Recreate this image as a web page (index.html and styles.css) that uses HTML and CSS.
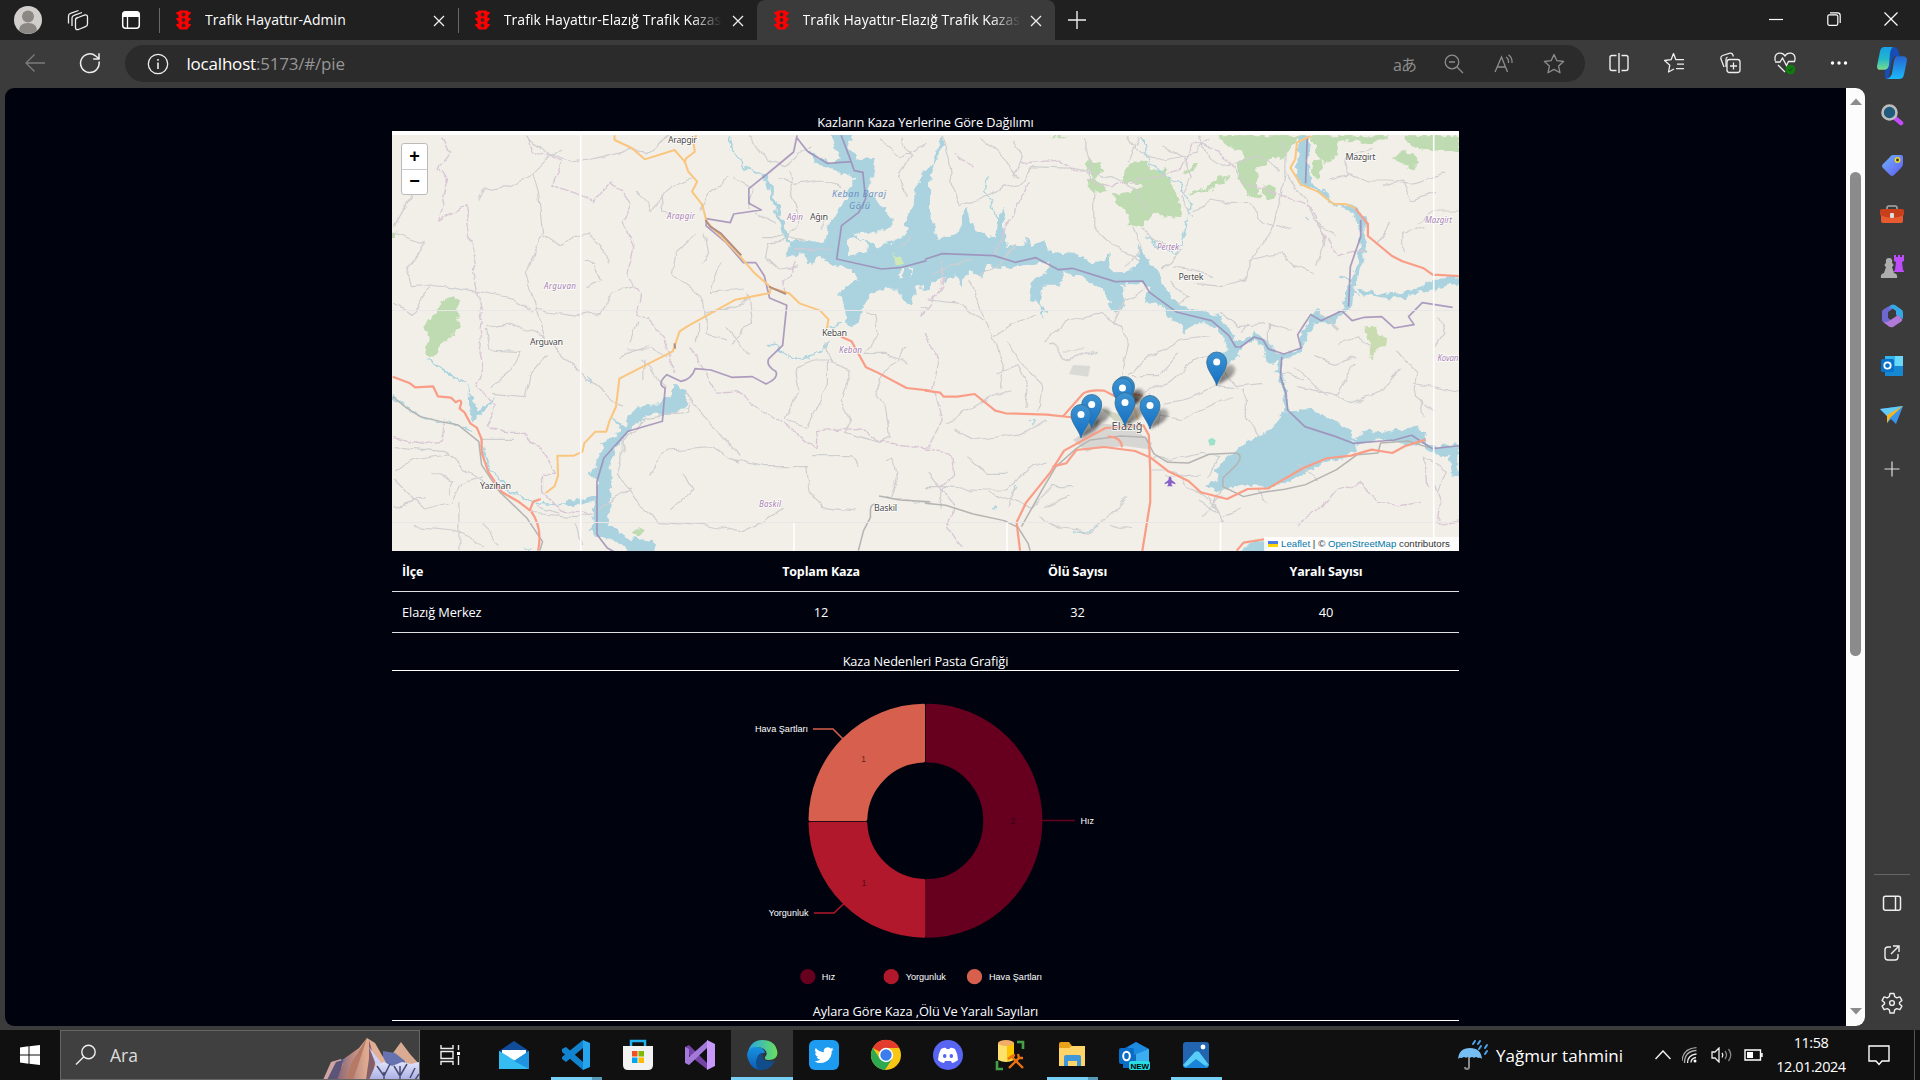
FILE: index.html
```html
<!DOCTYPE html>
<html lang="tr">
<head>
<meta charset="utf-8">
<title>Trafik Hayattır-Elazığ Trafik Kazası</title>
<link rel="stylesheet" href="styles.css">
</head>
<body>
<svg class="defs" width="0" height="0">
  <defs>
    <symbol id="light" viewBox="0 0 15 20"><path d="M4 .5h7q1.500 0 1.500 1.500H15q-.3 2.800-2.500 3.400V8H15q-.3 2.800-2.500 3.400V14H15q-.3 2.800-2.500 3.400 0 2.100-2.500 2.100H5q-2.500 0-2.500-2.100Q.3 16.800 0 14h2.500v-2.600Q.3 10.800 0 8h2.500V5.400Q.3 4.800 0 2h2.500Q2.500.5 4 .5Z" fill="#f00"/><g fill="#4a2222"><circle cx="7.500" cy="4.500" r="1.900"/><circle cx="7.500" cy="10" r="1.900"/><circle cx="7.500" cy="15.500" r="1.900"/></g></symbol>
    <symbol id="x" viewBox="0 0 12 12"><path d="M1 1l10 10M11 1L1 11" stroke="#eee" stroke-width="1.300"/></symbol>
    <linearGradient id="pinfill" x2="0" y2="1"><stop offset="0" stop-color="#3e93cf"/><stop offset="1" stop-color="#126fc6"/></linearGradient>
    <linearGradient id="shadefill" x1="0" y1="1" x2="1" y2="0"><stop offset="0" stop-color="#000" stop-opacity=".8"/><stop offset="1" stop-color="#000" stop-opacity=".3"/></linearGradient>
    <filter id="soft" x="-50%" y="-50%" width="200%" height="200%"><feGaussianBlur stdDeviation="1.800"/></filter>
    <filter id="coast" x="0" y="0" width="1067" height="416" filterUnits="userSpaceOnUse" color-interpolation-filters="sRGB"><feTurbulence type="fractalNoise" baseFrequency=".13" numOctaves="2" seed="4"/><feDisplacementMap in="SourceGraphic" scale="9" xChannelSelector="R" yChannelSelector="G"/></filter>
    <filter id="winding" x="0" y="0" width="1067" height="416" filterUnits="userSpaceOnUse" color-interpolation-filters="sRGB"><feTurbulence type="fractalNoise" baseFrequency=".06" numOctaves="2" seed="9"/><feDisplacementMap in="SourceGraphic" scale="9" xChannelSelector="R" yChannelSelector="G"/></filter>
    <g id="shade"><path d="M0 0L5-12Q10-24 17-19Q21-14 13-7Z" fill="url(#shadefill)" opacity=".75" filter="url(#soft)"/></g>
    <g id="pin"><path d="M0 0C-2-8-10-15-10-23.500A10 10 0 0 1 10-23.500C10-15 2-8 0 0Z" fill="url(#pinfill)" stroke="#2e6c97" stroke-width=".8"/><circle cy="-23.500" r="3.500" fill="#fff"/></g>
  </defs>
</svg>

<header class="tabs">
  <div class="tools">
    <svg width="28" height="28" viewBox="0 0 28 28"><circle cx="14" cy="14" r="14" fill="#d0cfcc"/><circle cx="14" cy="10.500" r="6" fill="#8b8884"/><path d="M5 24.500q0-7.500 9-7.500t9 7.500a14 14 0 0 1-18 0Z" fill="#8b8884"/></svg>
    <svg width="22" height="22" viewBox="0 0 22 22" fill="none" stroke="#eee" stroke-width="1.300"><path d="M1.500 14.500V7q0-2 2-2.600l8-2.900M5 17V9q0-2 2-2.600l8-2.900"/><path d="M11 8.500l7-2.500q2.500-.5 2.500 2v7q0 2-2 2.700l-7 2.800q-3 .8-3-2v-7.500q0-2 2.500-2.500Z"/></svg>
    <svg width="20" height="20" viewBox="0 0 20 20"><rect x="1.700" y="1.700" width="16.600" height="16.600" rx="3" fill="none" stroke="#fff" stroke-width="1.500"/><path d="M1.500 7V4q0-2.500 2.500-2.500h12q2.500 0 2.500 2.500v3Z" fill="#fff"/><path d="M6.500 7v11" stroke="#fff" stroke-width="1.300"/></svg>
  </div>
  <div class="tab bar"><svg class="lamp"><use href="#light"/></svg><span class="name">Trafik Hayattır-Admin</span><svg class="shut"><use href="#x"/></svg></div>
  <div class="tab bar"><svg class="lamp"><use href="#light"/></svg><span class="name fade">Trafik Hayattır-Elazığ Trafik Kazası</span><svg class="shut"><use href="#x"/></svg></div>
  <div class="tab active"><svg class="lamp"><use href="#light"/></svg><span class="name fade">Trafik Hayattır-Elazığ Trafik Kazası</span><svg class="shut"><use href="#x"/></svg></div>
  <svg class="add" width="18" height="18" viewBox="0 0 18 18"><path d="M9 0v18M0 9h18" stroke="#eee" stroke-width="1.400"/></svg>
  <div class="window">
    <svg width="14" height="14" viewBox="0 0 14 14"><path d="M0 7.500h14" stroke="#fff" stroke-width="1.200"/></svg>
    <svg width="14" height="14" viewBox="0 0 14 14" fill="none" stroke="#fff" stroke-width="1.200"><rect x=".8" y="2.800" width="10" height="10.500" rx="1.500"/><path d="M3 .8h7.500q2.700 0 2.700 2.700V11"/></svg>
    <svg width="14" height="14" viewBox="0 0 14 14"><path d="M.5.500l13 13M13.500.500l-13 13" stroke="#fff" stroke-width="1.200"/></svg>
  </div>
</header>

<div class="toolbar">
  <div class="nav">
    <svg width="20" height="18" viewBox="0 0 20 18" fill="none" stroke="#7c7c7c" stroke-width="1.300"><path d="M20 9H1M9.500.5L1 9l8.500 8.500"/></svg>
    <svg width="22" height="22" viewBox="0 0 22 22" fill="none" stroke="#eee" stroke-width="1.500"><path d="M20 9.500A9.300 9.300 0 1 1 16.500 3.800L20 6.800M20 1.200v5.700h-5.800"/></svg>
  </div>
  <div class="address">
    <svg width="22" height="22" viewBox="0 0 22 22" fill="none" stroke="#eee" stroke-width="1.300"><circle cx="11" cy="11" r="9.700"/><path d="M11 9.500v6.500M11 6v1.700" stroke-width="1.600"/></svg>
    <span class="url">localhost<i>:5173/#/pie</i></span>
    <span class="lang">aあ</span>
    <svg width="20" height="20" viewBox="0 0 20 20" fill="none" stroke="#8d8d8d" stroke-width="1.300"><circle cx="8" cy="8" r="6.800"/><path d="M13 13l6 6M5 8h6"/></svg>
    <svg width="20" height="20" viewBox="0 0 20 20" fill="none" stroke="#8d8d8d" stroke-width="1.300"><path d="M1 18L7.500 3 13.500 18M3.300 13h8.200M12 3q3 2 2.500 6M14.500.8q4 3 3.500 8.200"/></svg>
    <svg width="22" height="22" viewBox="0 0 22 22" fill="none" stroke="#8d8d8d" stroke-width="1.300" stroke-linejoin="round"><path d="M11 1.500l2.900 6.200 6.700.8-5 4.600 1.400 6.700-6-3.400-6 3.400 1.400-6.700-5-4.600 6.700-.8Z"/></svg>
  </div>
  <div class="extras">
    <svg width="22" height="22" viewBox="0 0 22 22" fill="none" stroke="#eee" stroke-width="1.400"><path d="M8.500 3.500H4Q2 3.500 2 5.500v11q0 2 2 2h4.500M13.500 3.500H18q2 0 2 2v11q0 2-2 2h-4.500M11 1v20"/></svg>
    <svg width="22" height="22" viewBox="0 0 22 22" fill="none" stroke="#eee" stroke-width="1.300" stroke-linejoin="round"><path d="M11 17l-5.500 3 1.300-6.800-5.200-4.700 6.500-.8L10.500 1.500l2.400 6.200h8.100M14 12.200h7M13 16.700h8"/></svg>
    <svg width="22" height="22" viewBox="0 0 22 22" fill="none" stroke="#eee" stroke-width="1.300"><path d="M5 15L1.800 6.500Q1.500 4.300 3.500 3.500L11 1.200q2.300-.3 3 2l.4 1.300"/><path d="M7 15V7.500q0-1.800 1.500-2.500"/><rect x="8" y="7.500" width="13" height="13" rx="2.500"/><path d="M14.500 10.500v7M11 14h7"/></svg>
    <svg width="22" height="24" viewBox="0 0 22 24"><path d="M1.300 10Q-.2 3.500 5 2.200q4-.7 6 2.800 2-3.500 6-2.800 5.200 1.300 3.700 7.800M1 11h5l2.500-4 4 7.500 2-4H21M4 14l7 7" fill="none" stroke="#eee" stroke-width="1.300"/><circle cx="16.500" cy="18.500" r="4.800" fill="#107c10"/><path d="M14.500 18.500l1.500 1.500 2.700-3" fill="none" stroke="#163f16"/></svg>
    <svg width="18" height="6" viewBox="0 0 18 6" fill="#fff"><circle cx="2.500" cy="3" r="1.700"/><circle cx="9" cy="3" r="1.700"/><circle cx="15.500" cy="3" r="1.700"/></svg>
    <svg width="30" height="32" viewBox="0 0 30 28" preserveAspectRatio="none"><defs><linearGradient id="c1" x2="0" y2="1"><stop stop-color="#18a0e8"/><stop offset=".5" stop-color="#20b7ca"/><stop offset="1" stop-color="#7bdc8d"/></linearGradient><linearGradient id="c2" x2="0" y2="1"><stop stop-color="#2765d2"/><stop offset="1" stop-color="#1cb8fa"/></linearGradient></defs><path d="M7 0h9q5 0 6 5l1 3h-4q-3 0-4 4L12 26q-1 2-3 2-1 0-1-3Z" fill="#174db4"/><path d="M7 0h9q-2 1-3 5l-1 11q-1 4-5 4H3q-4 0-2.600-5L3 4Q4 0 7 0Z" fill="url(#c1)"/><path d="M20 8h6q5 0 3.700 5L27 24q-1 4-5 4H9q5-1 6-5l2-11q1-4 3-4Z" fill="url(#c2)"/></svg>
  </div>
</div>

<div class="workspace">
<main class="page">
  <div class="content">
    <h2 class="title">Kazların Kaza Yerlerine Göre Dağılımı</h2>
    <div class="map">
      <svg class="tiles" width="1067" height="416" viewBox="0 4 1067 416">
        <g transform="translate(0 4)">
        <g filter="url(#coast)"><g transform="translate(0 -4)">
          <g transform="translate(-2 -21) scale(.3444 .3333)">
            <path class="wood" d="M125 620L150 580 185 558 202 570 195 620 206 650 175 685 150 700 130 740 105 735 112 690 100 650Z"/>
            <path class="wood" d="M6 368h14v16H6ZM705 1268l15-12 14 8-12 14h-14Z"/>
            <path class="water" d="M1275 66L1343 66 1330 120 1370 150 1408 140 1400 200 1385 240 1430 285 1460 330 1455 350 1420 370 1365 372 1345 365 1350 380 1400 395 1415 410 1445 400 1485 380 1505 365 1495 340 1520 290 1525 225 1568 180 1568 540 1530 530 1512 590 1490 570 1470 535 1420 540 1392 560 1370 590 1368 620 1350 650 1325 640 1322 600 1300 555 1330 525 1355 510 1340 480 1290 465 1250 440 1220 470 1200 430 1150 445 1160 395 1210 390 1260 400 1270 350 1310 290 1330 240 1350 200 1290 180 1240 165 1205 120 1280 155 1310 145 1285 110Z"/>
            <path class="land" d="M1330 392l25-6 28 8 6 26-24 12-35 4ZM1480 480l12 0-4 24-8 0ZM1508 478l8 0-4 20Z"/>
            <path d="M1465 432l16 8 6 22-16 0Z" fill="#cfe8b4"/>
            <path class="water" d="M823 824L850 835 862 860 860 885 830 910 760 915 715 935 695 970 655 1010 640 1060 640 1100 645 1140 635 1240 660 1260 700 1290 740 1285 775 1300 770 1326 700 1326 650 1290 600 1278 585 1260 590 1200 605 1150 600 1110 580 1090 600 1060 615 1020 610 1000 640 985 680 955 690 920 720 890 790 878 810 860Z"/>
            <path class="water" d="M228 825l15 50 10 30 60-45-50 55-17 16-16-30ZM510 1172l45-6 58-15 5 18-60 14-48 4ZM640 920l44 30-8 14Z"/>
            <path class="thinwater" d="M1080 195l20 30 20 60 20 70 20 40" stroke-width="11"/>
            <path class="thinwater" d="M985 76l5 40 45 60 48 20M105 745l50 35 70 45M1100 710q22-24 28 10 50 50 125 5l20-30M1265 655l50-15M265 1000l20 70 60 70 70 40 100 5M600 1100l-30-10M390 1318h20" stroke-width="5"/>
            <path class="thinwater" d="M8 860l80 60 110 25 40 20M573 805l12 8" stroke-width="4"/>
          </g>
          <g transform="translate(533 -21) scale(.3444 .3333)">
            <g class="wood">
              <path d="M545 250L600 245 640 225 575 215 580 180 600 155 645 152 655 180 690 175 715 215 735 260 742 325 700 320 660 310 625 350 595 340 585 310 560 280ZM470 155L505 150 515 185 495 205 525 240 480 245 475 210 490 195 470 180ZM858 76L1110 76 1060 105 1040 150 1010 140 990 165 965 175 960 220 980 260 945 265 910 210 905 160 935 130 870 105Z"/>
              <path d="M1120 76L1345 76 1290 106 1250 92 1200 95 1195 140 1160 160 1135 120ZM1125 150L1150 145 1155 170 1140 210 1120 195ZM1395 76L1551 76 1551 130 1500 122 1450 120 1405 108ZM1355 145L1390 118 1425 135 1428 160 1410 180 1390 155ZM770 245L830 230 850 200 880 195 870 225 820 240 775 256ZM750 180l40-18-6 16-34 14ZM980 235L1020 225 1015 265 990 272ZM370 76h40v6h-40Z"/>
              <path fill="#c8dcb0" d="M1272 652L1310 650 1318 680 1342 684 1338 708 1312 712 1300 748 1288 740 1295 700Z"/>
            </g>
            <path class="water" d="M-8 180L20 170 42 100 46 76 54 100 20 180 8 260 20 330 40 390 100 370 115 292 140 350 180 375 205 380 208 330 200 300 215 320 235 290 228 340 238 410 285 410 295 378 312 408 345 388 360 425 410 430 460 440 490 465 520 450 535 425 540 480 565 490 605 475 618 460 622 400 645 450 680 490 690 530 740 585 800 600 850 615 880 650 905 690 925 690 960 668 990 690 1020 725 1060 725 1088 715 1090 670 1115 640 1120 612 1140 600 1165 625 1215 595 1225 540 1250 480 1262 400 1265 370 1245 310 1190 285 1250 290 1282 330 1283 400 1270 460 1245 530 1240 590 1180 640 1130 640 1108 680 1100 725 1050 745 1015 760 990 755 980 715 960 690 925 705 900 750 870 765 850 730 880 715 850 660 820 640 780 640 755 675 740 640 700 620 680 580 635 575 650 530 610 520 575 525 578 580 555 615 530 570 515 535 460 500 410 490 390 530 345 530 335 580 352 600 345 625 330 580 305 570 310 520 350 490 360 455 290 465 240 475 180 465 165 505 130 485 105 530 90 490 60 520 50 500 20 520 -8 530Z"/>
            <path class="water" d="M1040 905L1120 900 1170 920 1190 935 1235 960 1245 1000 1250 1020 1230 1040 1150 1060 1100 1090 1040 1125 980 1130 900 1125 860 1145 815 1125 850 1110 845 1080 870 1045 930 1000 990 970 1020 935ZM1245 990L1280 962 1350 970 1420 948 1455 970 1460 1005 1500 1005 1551 1000 1551 1090 1530 1095 1520 1040 1470 1030 1440 1000 1400 1005 1330 985 1250 1005ZM920 1326L950 1295 990 1295 990 1326Z"/>
            <path class="water" d="M1085 80L1120 80 1110 140 1115 205 1140 235 1120 238 1080 210 1082 140ZM1250 533L1310 550 1375 553 1430 535 1480 510 1551 505 1551 520 1500 535 1440 545 1390 565 1340 565 1260 550Z"/>
            <path class="thinwater" d="M1135 230l60 55M1035 745l-8 40 18 60 6 60M1470 510l80-5" stroke-width="12"/>
            <path class="thinwater" d="M632 80l22 80 80 60 40 60-16 70-20 70M640 380l60 40 30 15 10-20M180 200l-4 40 25 60M1230 530l30 30M1200 505l40 5M250 1150l20-30M195 1200l16-14M430 1262l50 5 20-20M1105 322l14 10M305 935h14v14" stroke-width="4"/>
          </g>
        </g></g>
        <g filter="url(#winding)"><g transform="translate(0 -4)">
          <g transform="translate(-2 -21) scale(.3444 .3333)">
            <path class="lane" d="M400 76l60 60 60 20 48 -5 120-30 60 5 66-50M415 190l48-50 40-20M415 190l16 60 12 120-50 120 30 110 30 90 60 60 100 90 60 52M260 270l20-30 60-10 60-30 16-10M10 350l50-90 20-60M10 370l90 30-50 70 15 60 55-5 70 10 80 15 100 20 46 40M10 580l50 30 60-80M445 380l50 30 40-30 40-10 40 30 20 60M555 460l40 0 20 50-50 20M420 600l130 20 60-10 40-60 60-20M280 650l60-10 50 20 60 20M280 660l10 60 90 5-30 60-60 50M455 730l-50 60-15 70-90-10M720 240l40 60 60-70 60-20M790 260l5 40 60 20M1000 200l60 40-20 60M985 205l-60 40-30 60M1040 80l50 70 60 20 70-60M1130 200l40 20 80-10 60 20M1160 180l10 80 20 70-40 50 60 10M1250 360l20-40M890 370l-60 60-10 60 80 60 20 60-5 60 60 20M915 370l10 60-20 30M960 460l-30 90 100-10M920 610l60-20 60-20M1040 560l10 80-60 60M980 650l60 80M690 720l70 0 50 20M700 700l20-60M660 740l90-30M730 750l70 80M740 750v60M890 640v60M860 850l50 70 50 50 60 70M870 870l-10 40-120 15-60 60 0 40-20 60 60 100 60 50 150 10 80 20 70-30 60-40M750 1090l60-70 120-10 60 40 100 20 120 0 10 80 40 40 90 10M940 1020l70 40M850 1080l30 60-60 60M1180 770l50-20 40 0 0 80-60 120-60-20 20-60 20-30ZM1260 700l20 60 60 20-30 90 30 60-20 40 100 30 30-20-10-80-30-60 30-60 60-70M1380 610l30 0 10 60-40 60 60 0 60 30M1220 1040h120l20 30M1440 1050l20-10 10 60-20 60M1440 1160l130 20M10 1010l150 15 60 60 100 60M10 1080l60-30 100-15M10 1110l90 90 80-20 30-60 60-20M10 1190l90-30M260 985l100 0M430 1190l60 20M120 1090l60 20-10 40M200 1180l0 140M70 1250l120 10 80 50M260 1240l60 60M410 1210l130 10 40-10M540 1240l20 70M600 1200l100-60M1540 600l20-10M1490 80l20 60-30 60 20 60M1420 80l60 60 80-40M1480 420l30-40M1190 470l-60 10-40-40 10-40 50-10M1060 310l60 30M1080 380l60 0"/>
            <path class="border" d="M150 80l20 50-30 40 30 50-30 110 80-40 10 90 20 60-10 50 30 150-10 80 10 50-20 60 60 60-30 60 50 20 60 0 60 60 30 60-40 0 0 50 50 60 100 10M400 76l20 50 80 30-30 70 80 30 45 20 45-60 60 60-20 60 30 80-20 80 40 60-10 60 30 10 50 60 20 60 5 40M870 710l80 140 60-5 70 60 70 40 90 70 4-50 120-10 50 40 154 20M1180 460l-40 60 10 25M1180 420l100-4M10 980l80 20 60-10 10-60"/>
          </g>
          <g transform="translate(533 -21) scale(.3444 .3333)">
            <path class="lane" d="M50 80l20 60 10 90 20 60 60-20 60-40 60-10 30-50 120 5 60 10 60 20 60 30 40 80M160 80l60 50 50 70M250 90l30 50-20 60M460 80l20 70 0 60M590 80l20 40 80 30 100-20 40-40M620 80l-30 80M800 80l20 60 60 30 90-30 60 40M690 110l60 30 20 60-30 60 40 60M490 250l0 100 60 60 70 40M600 350l30 60-50 60M630 360l60 40 60 20-60 60M780 300l50-30 60 10 50 0 30 50 90 30M1045 100l0 100-20 100-20 60-60 90-20 60-60 20-80-10M1050 200l60 70 20 60 60 50M940 450l90-20 40 40 60 20M1140 460l20-60-10-60M1170 210l60-20 60 20 60 0 60 10 100-30M1220 200l10-60 70-30M1330 230l60-20 20 60 80-20M1310 400l40-60M1390 430l0-60 60-20M1430 340l60-40 60 0M130 510l30 80 30 80 40 110-10 60M10 570l90 10 70 50M160 500l60-40 40-60M20 490l120-40M350 690l70-60 90-20 60 40 20 60-20 90 30 60M360 700l60 50 80-30M200 680l60-40 60-20M240 700l40 60 60 60-10 90M210 790l60-20 30 60-10 70M550 640l30-70 60-30M590 800l60-60 90-50 90-10M600 800l80 0 60-70M620 850l100-40 60-60 60-20M690 880l60-10 100-40 80 10 0 80 40 60M680 910l60 20 120-60 40 0M650 850l30 50 0 50M400 720l60 0M720 470l60 10 50 20M710 520l60 40-40 20M860 610l50 40 80-10M940 640l-20 30M1000 700l0-60 60 20M860 770l40 60 80-10M1070 770l40 30 60 60M1130 740l60 20 60-20M1040 790l60 20M1080 830l100 20 60 30 80-30 60-80M1190 860l60-100M1370 720l60 70-10 70 60 50M1420 820l130 30M1140 600l60 60M1180 620l60-20M1200 700l60-20 40 30M1490 620l20 50-30 40M1450 920l-10-50M60 940l100-60 90-40M80 960l60 30 150-20 60-40M0 1130l60 0 120 10 60 0 60-60 60-30M60 1130l-20 60M10 1090l30 40M120 1040l60 50 60 0M190 1150l120 40 60-60 60 0M240 1190l30-60M330 1220l70 40 80 10 60-60 50-50M340 1190l80-30M660 1040l60 10 80-20 60 10-40 60M660 1080l60 0 40 50 60 40M700 1100l100-10M870 1120l-30 60 30 60M820 1160l40 60 60-20M790 1170l60 40M1080 1060l60 50M860 1160l-50 60M540 1240l60 20M970 1140l30 40M1450 1040l60 40-20 60"/>
            <path class="border" d="M275 160l120-10 30 30 60 10M300 220l-40 80-60 140M140 170l-50-40M480 210l60 20 200-50 40-80 70 20 80 100 90 30 100 40 40 90 40 60 70-20M50 440l0 90-60 90M0 670l40 70-20 90 30 100-40 80M0 1020l80 10 6 60-40 40 40 60-20 60 40 60M1080 1240l60-40 60-60 60-20 60 60 60 10 60-10M1480 1120l20 60-10 60 60-10M1450 1040l10 90"/>
          </g>
        </g></g>
        </g>
        <g transform="translate(-2 -21) scale(.3444 .3333)">
          <path class="rail" d="M8 860l40 34 40 26 60 15 50 10 60 50 8 70 52 80 80 80 45 70-8 27M1360 1322l15-60 20-40 0-20q0-20 15-20M1420 1158l60 12 88 5"/>
          <path class="district" d="M1182 76l-10 50-70 60-60 50v44l36 20-80 12-10 26-70-12v22l58 50 50 60 36 0 25 40 15 66 50 22-12 120-40 40q-10 20 20 38 10 20-28 38l-40-22-60 2-60-22-46-4q-10 32-42 38l-40-20q-32 30-5 40l-8 100-100 30-70 80-20 70v160l30 40 70 40M1182 84l30 40 58 36 70-5M1310 76l28 76 10 30 25 5 8 80-20 40-50 40-14 100 130 30 60-5 71-20"/>
          <path class="yellow" d="M652 76v14l50 24 38 34 86-28 30 35 10 30 26 30-15 30 30 40 12 50 90 95 50 60 50 45 50 15 30 30 60 22 24 26-5 32M890 76l-10 14 5 35-25 20-5 15M1105 535l-2 14-100 20-140 80-22 15-20 60-60 32-95 50-10 85-18 40-10 34h-32l-32 35-5 25-25 12h-48l2 60-10 32-26 20"/>
          <path class="brown" d="M916 330l14 20 30 20 60 66M1100 530l50 22M826 700l2 16"/>
          <path class="red" d="M8 800l50 20 15 12 52-3 14 30 38 4 14 14q15-12 16 2l-5 16 14 12 18 34 18 12 14 34v40l20 60 40 60 50 30 30 24 10-26 22-8M410 1204q34 50 20 118M1310 680l30 14 42 78 34 16 84 46 68 8"/>
        </g>
        <g transform="translate(533 -21) scale(.3444 .3333)">
          <path d="M430 765l50 3-6 32-56-8Z" fill="#d9d9d6"/>
          <path d="M430 990l50-36 30-14 90 10 60 50-10 18-70-10-90 8-20 10Z" fill="#d8d6d3"/>
          <path d="M510 895l60 20 40 30 20 20-50-5ZM590 850l40 10-10 30Z" fill="#d0d5c3"/><path d="M822 990l12-7 10 8-3 14-14 2Z" fill="#9fe0cb"/>
          <path class="district" d="M0 448l50-17 150 6 62 20 60-14 66 36 40-4 124 40 80-2 20 34 80 60 100 25 50 44 20 35h14l40-30 25 8 16 28 45 15 50-18-10-40 20-32 18-28 30 18 60-30 30 30 36-10 50-2 36 34 58-10-16-24 40-42 88 14"/>
          <path class="district" d="M1110 80l-5 140M1230 590l5-120 30-90v-50M1036 740l-4 60 16 50 5 50 50 50 90 30 50 20 120-10 50-14 60 40 90-10" opacity=".5"/>
          <path class="rail" d="M0 1180l60 6 80 26 90 20 40 20 30 50 5 20M280 1250l60-110 40-70 60-55 40-25 90-12 70 4 25 50 40 25 60 2 60-26 80-4q20 8 0 35l-40 40 0 26 60 30 60-14 60-8 60-14 90-45 60-45 60-5 8-30 80-6 60 20"/>
          <path class="red" d="M0 842l44 6 10 12h40l50-8 60 50 30 8 120 4 90 10M400 920l60-70q20-12 60-8l30 16 70 12M600 850l32 8M276 1322l-10-85 28-60 70-90 40-65 60-34 60-34 110-8 16 30 4 110v90l-25 160M370 1070l40-10 30-40 80-9 90 12 45 20 50 40 60 30 36 34 76 20 60-30 60-2 100-60 70-30 70-8 60-18 60 10 36-20 60-20M530 980q40 0 42 32M1250 296l36 46v36l70 60 30 16 60 20 28 20 76 4M905 1322l20-24 60-10"/>
          <path class="yellow" d="M1120 78l-40 20-5 50-14 25 30 50 50 22 44 36 40 2 25 12"/>
          <path d="M711 1100q5 0 5 10l11 9v4l-11-4v6l4 4h-18l4-4v-6l-10 4v-4l11-9q0-10 4-10Z" fill="#8761c7"/>
          <path d="M585 880l20 5 14 45" stroke="#fcd6a4" stroke-width="7" fill="none"/>
        </g>
        <g fill="none" stroke="#e8e6e6" stroke-width="1"><path d="M0 179.500h1067M0 391.500h1067"/></g>
        <g fill="none" stroke="#fff" stroke-width="1.600"><path d="M188.700 4v416M1041.700 4v416M402 392v28M615 392v28M828.500 392v28"/></g>
        <g class="town">
          <text x="276" y="12" textLength="29">Arapgir</text><text x="138" y="214" textLength="33">Arguvan</text><text x="418" y="88.500" textLength="18">Ağın</text><text x="430" y="204.500" textLength="25">Keban</text><text x="88" y="358" textLength="31">Yazıhan</text><text x="482" y="380" textLength="23">Baskil</text><text x="786.500" y="148.500" textLength="25">Pertek</text><text x="953.500" y="29" textLength="30">Mazgirt</text>
          <text class="big" x="719.500" y="299" textLength="31">Elazığ</text>
        </g>
        <g class="region">
          <text x="275" y="88" textLength="28">Arapgir</text><text x="152" y="158" textLength="32">Arguvan</text><text x="395" y="89" textLength="16">Ağın</text><text x="447" y="222" textLength="23">Keban</text><text x="367" y="375.500" textLength="22">Baskil</text><text x="765" y="119" textLength="22">Pertek</text><text x="1033" y="92" textLength="27">Mazgirt</text><text x="1045.500" y="229.500" textLength="21">Kovan</text>
          <text class="lake" x="440" y="65.500" textLength="54">Keban Baraj</text><text class="lake" x="457" y="77.500" textLength="21">Gölü</text>
        </g>
        <g><use href="#shade" x="825" y="254"/><use href="#shade" x="731" y="280"/><use href="#shade" x="734" y="278"/><use href="#shade" x="700" y="297"/><use href="#shade" x="689" y="307"/><use href="#shade" x="733" y="295"/><use href="#shade" x="758" y="298"/></g>
        <g><use href="#pin" x="824.700" y="254.500"/><use href="#pin" x="732.500" y="279"/><use href="#pin" x="730.500" y="280.500"/><use href="#pin" x="699.700" y="297"/><use href="#pin" x="689" y="307"/><use href="#pin" x="733" y="295"/><use href="#pin" x="758" y="298"/></g>
      </svg>
      <div class="zoom"><b>+</b><b>−</b></div>
      <div class="credit"><svg width="10" height="6" viewBox="0 0 10 6"><path fill="#4c7be1" d="M0 0h10v3H0z"/><path fill="#ffd500" d="M0 3h10v3H0z"/></svg><a>Leaflet</a> | © <a>OpenStreetMap</a> contributors</div>
    </div>
    <div class="table">
      <div class="row head"><span>İlçe</span><span>Toplam Kaza</span><span>Ölü Sayısı</span><span>Yaralı Sayısı</span></div>
      <div class="row"><span>Elazığ Merkez</span><span>12</span><span>32</span><span>40</span></div>
    </div>
    <h2 class="title second">Kaza Nedenleri Pasta Grafiği</h2>
    <svg class="chart" width="1067" height="330" viewBox="392 671 1067 330">
      <g stroke-linejoin="round" stroke-width="3">
        <path d="M927.300 705.300A113.700 115.500 0 0 1 927.300 936.300V880.500A57.500 59.700 0 0 0 927.300 761.100Z" fill="#67001f" stroke="#67001f"/>
        <path d="M924 936.300A115.500 115.500 0 0 1 810 823.300H865.800A60 60 0 0 0 924 880.500Z" fill="#b2182b" stroke="#b2182b"/>
        <path d="M810 819.500A115.500 115.500 0 0 1 923.500 705.300V761.100A60 60 0 0 0 865.800 819.500Z" fill="#d6604d" stroke="#d6604d"/>
      </g>
      <g fill="none" stroke-width="1.500"><path d="M813 729h20l10 10" stroke="#d6604d"/><path d="M814 913h20l10-9.500" stroke="#b2182b"/><path d="M1042 820.500h33" stroke="#67001f"/></g>
      <g class="caption"><text x="755" y="732">Hava Şartları</text><text x="768.500" y="916">Yorgunluk</text><text x="1080.500" y="824">Hız</text><text x="821.700" y="980">Hız</text><text x="905.700" y="980">Yorgunluk</text><text x="989" y="980">Hava Şartları</text></g>
      <g class="value"><text x="861" y="761.500" fill="#6a2622">1</text><text x="861.500" y="886" fill="#590c18">1</text><text x="1010.500" y="824" fill="#330010">2</text></g>
      <circle cx="807.800" cy="976.700" r="7.600" fill="#67001f"/><circle cx="891.200" cy="976.700" r="7.600" fill="#b2182b"/><circle cx="974.500" cy="976.700" r="7.600" fill="#d6604d"/>
    </svg>
    <h2 class="title third">Aylara Göre Kaza ,Ölü Ve Yaralı Sayıları</h2>
  </div>
  <div class="scroll">
    <svg width="12" height="8" viewBox="0 0 12 8"><path d="M0 7L6 .5 12 7Z" fill="#8b8b8b"/></svg>
    <div class="thumb"></div>
    <svg width="12" height="8" viewBox="0 0 12 8"><path d="M0 1l6 6.500L12 1Z" fill="#8b8b8b"/></svg>
  </div>
</main>
<aside class="side">
  <svg viewBox="0 0 24 24"><path d="M15 15l6 5" stroke="#c24bfa" stroke-width="4.500" stroke-linecap="round"/><circle cx="9.500" cy="9.500" r="7" fill="#205a7d" stroke="#bcbcbc" stroke-width="2.600"/></svg>
  <svg viewBox="0 0 24 24"><defs><linearGradient id="tg" x2="1" y2="1"><stop stop-color="#6db4ff"/><stop offset="1" stop-color="#6159ed"/></linearGradient></defs><path d="M13 2h8q2 0 2 2v7q0 2-2 4l-7 7q-2 2-4 0l-7-7q-2-2 0-4l7-7q1-2 3-2Z" fill="url(#tg)"/><circle cx="17.500" cy="7" r="2.200" fill="#26394f" stroke="#f9d71d" stroke-width="1.500"/></svg>
  <svg viewBox="0 0 24 24"><path d="M7 7V5q0-2 2-2h6q2 0 2 2v2" fill="none" stroke="#aaa" stroke-width="1.500"/><path d="M1 8h22v10q0 2-2 2H3q-2 0-2-2Z" fill="#e85b30"/><path d="M0 7.500q0-1.500 2-1.500h20q2 0 2 1.500V12q-6 3-12 3T0 12Z" fill="#c7401b"/><rect x="10" y="10" width="4" height="5" rx="1" fill="#ddd"/></svg>
  <svg viewBox="0 0 24 24"><path d="M14 1h2v2h2V1h2v2h2V1h2v6l-2 1 1 8 2 2H13l2-2 1-8-2-1Z" fill="#bd4cfa"/><path d="M1 24q-1-4 3-5l2-6q-3-2 0-4-1-5 3-5t3 5q3 2 0 4l2 6q4 1 3 5Z" fill="#adadad"/></svg>
  <svg viewBox="0 0 24 24"><path d="M11 1q-8 4-9 6v10l6 4 3-5-3-2V8l6-4Z" fill="#6d67cf"/><path d="M11 1q2-1 4 0l7 5q1 1 1 3v6l-7-4V7l-4-3-3 1Z" fill="#34a8e5"/><path d="M22 15q1 2-3 4l-6 4q-3 1-6-2l-4-3q3 1 6-1l9-6Z" fill="#b17ad8"/></svg>
  <svg viewBox="0 0 24 24"><path d="M6 2h15q2 0 2 2v16q0 2-2 2H5V2Z" fill="#34b4ec"/><path d="M5 12h18v8q0 2-2 2H5Z" fill="#1687d2"/><path d="M15 2h8v10h-8Z" fill="#6ad8fa"/><rect x="1" y="5" width="13" height="13" rx="1.500" fill="#0872cb"/><circle cx="7.500" cy="11.500" r="3.200" fill="none" stroke="#fff" stroke-width="1.800"/></svg>
  <svg viewBox="0 0 24 24"><path d="M0 5l23-3-7 18-5-5-4 4V12Z" fill="#3995ea"/><path d="M0 5l23-3L7 12Z" fill="#62ccf6"/><path d="M23 2L7 11v8l3-5Z" fill="#f6b51d"/></svg>
  <svg class="more" viewBox="0 0 24 24"><path d="M12 4.500v15M4.500 12h15" stroke="#ddd" stroke-width="1.200"/></svg>
  <div class="foot">
    <svg viewBox="0 0 24 24" fill="none" stroke="#eee" stroke-width="1.500"><rect x="3.500" y="5.200" width="17" height="14" rx="2"/><path d="M15.500 5v14"/></svg>
    <svg viewBox="0 0 24 24" fill="none" stroke="#eee" stroke-width="1.400"><path d="M11 6H8Q5 6 5 9v7q0 3 3 3h7q3 0 3-3v-3M13 5h6v6M19 5l-8 8"/></svg>
    <svg viewBox="0 0 24 24" fill="none" stroke="#eee" stroke-width="1.400" stroke-linejoin="round"><path d="M10 2.500h4l.7 3.200 2 1.200 3.200-1 2 3.500-2.400 2.200v1.300l2.400 2.200-2 3.500-3.200-1-2 1.200-.7 3.200h-4l-.7-3.200-2-1.200-3.200 1-2-3.500 2.400-2.200v-1.300L2.100 9.400l2-3.500 3.200 1 2-1.200Z"/><circle cx="12" cy="12" r="2.400"/></svg>
  </div>
</aside>
</div>

<footer class="taskbar">
  <div class="start"><svg width="20" height="20" viewBox="0 0 20 20" fill="#fff"><path d="M0 2.500L8.500 1.300V9.500H0ZM9.500 1.200L20 0v9.500H9.500ZM0 10.500h8.500v8.200L0 17.500ZM9.500 10.500H20V20L9.500 18.800Z"/></svg></div>
  <div class="search">
    <svg width="22" height="22" viewBox="0 0 22 22" fill="none" stroke="#eee" stroke-width="1.400"><circle cx="13.500" cy="8" r="6.700"/><path d="M8.800 12.800L1 20.500"/></svg>
    <span>Ara</span>
    <svg class="peaks" width="96" height="42" viewBox="0 0 96 42"><defs><linearGradient id="rk" x2="1"><stop stop-color="#8c6673"/><stop offset=".5" stop-color="#dfa98f"/><stop offset="1" stop-color="#e9ba9d"/></linearGradient><linearGradient id="sn" x2="0" y2="1"><stop stop-color="#e0e4fd"/><stop offset="1" stop-color="#a9aee3"/></linearGradient></defs><path d="M15 24l9-5 10 2v21H10Z" fill="#5878bb"/><path d="M0 42L8 24 18 21l8 21Z" fill="#cfa5a3"/><path d="M4 42l9-18 7-2-4 20Z" fill="#5b5478"/><path d="M60 17l10-2 8-11 9 12 9 10v16H60Z" fill="#d9ab92"/><path d="M60 13l12 2 10 8v8H60Z" fill="#6673b0"/><path d="M14 42l8-22L36 10 44 0l8 5 8 14 12 23Z" fill="url(#rk)"/><path d="M44 0l-6 18-8 24h-7l6-18Z" fill="#b57966"/><path d="M46 2l6 22-2 18H43l3-22Z" fill="#825f6b"/><path d="M46 9l14 18 4 15h-6L52 24Z" fill="#cdd0f4"/><path d="M46 42l6-14 9-4 8 4 10-4 9 2 8-2v18Z" fill="url(#sn)"/><path d="M54 28l7 10 6-12M61 42V34M71 28l6 10 7-12M77 42V28M87 40l5-10M92 42l4-6" stroke="#4a4b70" stroke-width="1.500" fill="none"/></svg>
  </div>
  <div class="view"><svg width="21" height="20" viewBox="0 0 21 20" fill="none" stroke="#eee" stroke-width="1.400"><path d="M1 0v3.500h12V0M1 20v-3.500h12V20M1 6.500h12v7H1ZM18.500 0v5M18.500 11v9"/><path d="M17 7h3v3h-3Z" fill="#fff" stroke="none"/></svg></div>
  <div class="apps">
    <div class="app"><svg viewBox="0 0 32 32"><path d="M1 12L16 2l15 10v18H1Z" fill="#0f4d9a"/><path d="M4 11h24v13H4Z" fill="#fff"/><path d="M1 12l15 10 15-10v18H1Z" fill="#2fb5ec"/><path d="M1 12l30 18H1Z" fill="#35bdf2"/><path d="M16 22l15-10v18Z" fill="#1f93e0"/></svg></div>
    <div class="app open group"><svg viewBox="0 0 32 32"><path d="M23 1l7 3v24l-7 3Z" fill="#24a5ed"/><path d="M23 1v8L6 23l-4-3v-2ZM2 10l4-2 17 15v8L2 13Z" fill="#1183cf"/></svg></div>
    <div class="app"><svg viewBox="0 0 32 32"><path d="M9 8V2h14v6" fill="none" stroke="#24b1f0" stroke-width="2.500"/><path d="M1 7h30v19q0 5-5 5H6q-5 0-5-5Z" fill="#f2f2f2"/><path fill="#f25022" d="M10 12h5.500v5.500H10z"/><path fill="#7fba00" d="M16.500 12H22v5.500h-5.500z"/><path fill="#00a4ef" d="M10 18.500h5.500V24H10z"/><path fill="#ffb900" d="M16.500 18.500H22V24h-5.500z"/></svg></div>
    <div class="app"><svg viewBox="0 0 32 32"><path d="M1 8l4-2 19 19v6L1 13Z" fill="#7543a5"/><path d="M1 8v16l4 2L24 8V1L5 18V10Z" fill="#a379d9"/><path d="M23 1l8 4v22l-8 4Z" fill="#c797fa"/></svg></div>
    <div class="app open current"><svg viewBox="0 0 32 32"><defs><linearGradient id="e1"><stop stop-color="#27a4e8"/><stop offset="1" stop-color="#69e15b"/></linearGradient><linearGradient id="e2" x2="0" y2="1"><stop stop-color="#1792e0"/><stop offset="1" stop-color="#0b5bb5"/></linearGradient></defs><path d="M2 13C4 5 9 1 16 1q14 0 15.500 13Q31 21 23 21q-5 0-4-3 4-4-1-8-7-4-16 3Z" fill="url(#e1)"/><path d="M1 16q1-8 9-8 8 0 9 6-7-1-8 7-1 7 6 10-13 1-16-15Z" fill="url(#e2)"/><path d="M11 19q2-5 6-5-3 10 12 8-5 10-15 9-6-4-3-12Z" fill="#114c8b"/></svg></div>
    <div class="app"><svg viewBox="0 0 32 32"><rect x="1" y="1" width="30" height="30" rx="6" fill="#1d9bf0"/><path transform="translate(4.500 4.500) scale(.96)" fill="#fff" d="M22 5.900c-.7.3-1.500.5-2.400.6.900-.5 1.500-1.300 1.800-2.200-.8.500-1.700.8-2.600 1a4.100 4.100 0 0 0-7 3.700A11.700 11.700 0 0 1 3.400 4.700a4.100 4.100 0 0 0 1.300 5.500c-.7 0-1.300-.2-1.900-.5a4.100 4.100 0 0 0 3.300 4.100c-.6.200-1.200.2-1.900.1a4.100 4.100 0 0 0 3.900 2.800A8.300 8.300 0 0 1 2 18.400a11.700 11.700 0 0 0 18-10.400c.8-.6 1.500-1.300 2-2.100Z"/></svg></div>
    <div class="app"><svg viewBox="0 0 32 32"><circle cx="16" cy="16" r="15" fill="#f9c713"/><path d="M16 16L2.700 9A15 15 0 0 1 29.400 9H16Z" fill="#e33b2e"/><path d="M2.800 8.800A15 15 0 0 0 15 31l7-11-12 0Z" fill="#2da94f"/><circle cx="16" cy="16" r="7.200" fill="#fff"/><circle cx="16" cy="16" r="5.700" fill="#3b7ded"/></svg></div>
    <div class="app"><svg viewBox="0 0 32 32"><circle cx="16" cy="16" r="15" fill="#5865f2"/><path fill="#fff" d="M9 10q4-2 5-1l.5 1h3L18 9q1-1 5 1 3 5 3 11-4 3-6 3l-1-2h-6l-1 2q-3 0-6-3 0-6 3-11Z"/><ellipse cx="12.700" cy="17" rx="1.800" ry="2" fill="#5865f2"/><ellipse cx="19.300" cy="17" rx="1.800" ry="2" fill="#5865f2"/></svg></div>
    <div class="app"><svg viewBox="0 0 32 32"><path d="M4 4h16v17q-8 4-16 0Z" fill="#fde16c"/><path d="M13 5h7v15l-7 2Z" fill="#fbc500"/><ellipse cx="12" cy="4" rx="8" ry="3" fill="#f4ad65"/><path d="M23 3h6v7M3 22v8h6" fill="none" stroke="#44a047" stroke-width="2.600"/><path d="M15 29l11-11M18 18l11 11M14 20l4-3 3-1M24 15l1 4 4 0" fill="none" stroke="#eb7212" stroke-width="2.400"/></svg></div>
    <div class="app open group"><svg viewBox="0 0 32 32"><path d="M3 5q0-2 2-2h8l3 4h12v6H3Z" fill="#e8a219"/><path d="M3 9h10l3-2h13v20H3Z" fill="#ffd56a"/><path d="M8 27V18q0-2 2-2h13q2 0 2 2v9h-4v-5h-9v5Z" fill="#3f96d8"/></svg></div>
    <div class="app"><svg viewBox="0 0 32 32"><path d="M5 10L18 3l13 8v18H5Z" fill="#1169c4"/><path d="M18 10h13v18H18Z" fill="#3aaef0"/><path d="M16 16l15-6-13-7-8 5Z" fill="#1c8be0"/><rect x="1" y="9" width="15" height="16" rx="2" fill="#096cc7"/><ellipse cx="8.500" cy="17" rx="3.300" ry="4.300" fill="none" stroke="#fff" stroke-width="2"/><rect x="11" y="22" width="21" height="9" rx="2" fill="#29dce2"/><text x="12.500" y="29.500" class="new">NEW</text></svg></div>
    <div class="app open"><svg viewBox="0 0 32 32"><rect x="3" y="3" width="26" height="26" rx="3" fill="#2264b0"/><path d="M3 27L15 13q2-2 4 0l10 13-3 3H6Z" fill="#37bff1"/><path d="M16 29L3 26l12-13 4 0 9 12Z" fill="#58cdf8"/><path d="M5 29l11-9 12 9Z" fill="#1a85d8"/><circle cx="23" cy="8" r="2.400" fill="#fff"/></svg></div>
  </div>
  <div class="weather"><svg width="30" height="30" viewBox="0 0 30 30"><path d="M11 16v11q0 2-2 2t-2-2" fill="none" stroke="#888" stroke-width="2"/><path d="M0 19Q1 8 12 8t12 11q-2-2-4-1-2-2-4 0-2-2-4 0-2-2-4 0-2-2-4 0-2-1-4 1Z" fill="#76bdf3"/><path d="M15 4l2-3M20 4l2-3M21 9l2-3M27 8l2-3M27 14l2-3" stroke="#4ba4ef" stroke-width="2" stroke-linecap="round"/></svg><span>Yağmur tahmini</span></div>
  <div class="tray">
    <svg width="16" height="10" viewBox="0 0 16 10"><path d="M.5 9L8 1l7.500 8" fill="none" stroke="#eee" stroke-width="1.500"/></svg>
    <svg width="17" height="17" viewBox="0 0 17 17" fill="none" stroke="#eee" stroke-width="1.300"><path d="M9 15.500q0-4 5-5M5.500 16q0-8 9-9" /><path d="M2.500 16q0-12 12-12.500M0 14Q1 1.500 14.500.700" stroke="#aaa"/><circle cx="13" cy="14" r="1.500" fill="#fff" stroke="none"/></svg>
    <svg width="22" height="16" viewBox="0 0 22 16" fill="none" stroke="#eee" stroke-width="1.300"><path d="M1 5h3l4-4v14l-4-4H1ZM11 6q1.500 2 0 4.500"/><path d="M14 4q3 4 0 8M17.500 2q4.500 6 0 12" stroke="#888"/></svg>
    <svg width="20" height="12" viewBox="0 0 20 12"><path d="M1 1h15.500v10H1ZM18 4v4" fill="none" stroke="#fff" stroke-width="1.400"/><path d="M3 3h6v6H3Z" fill="#fff"/></svg>
  </div>
  <div class="clock"><span>11:58</span><span>12.01.2024</span></div>
  <div class="note"><svg width="22" height="22" viewBox="0 0 22 22"><path d="M1 2h20v15h-7l-3 3.500L8 17H1Z" fill="none" stroke="#fff" stroke-width="1.400"/></svg></div>
</footer>
</body>
</html>
```
FILE: styles.css
```css
* { box-sizing: border-box; }
body { margin: 0; width: 1920px; height: 1080px; overflow: hidden; display: flex; flex-direction: column; background: #3b3b3b; color: #fff; font-family: "Open Sans", "Noto Sans", sans-serif; }
svg { display: block; flex: none; }
.defs { position: absolute; }

.tabs { height: 40px; flex: none; display: flex; align-items: center; background: #202020; }
.tools { width: 159px; padding: 0 19px 0 14px; display: flex; align-items: center; }
.tools svg:nth-child(2) { margin: 0 32px 0 25px; }
.tab { width: 298.800px; height: 40px; padding: 0 13px 0 17px; display: flex; align-items: center; font-size: 14px; letter-spacing: .06px; }
.bar { background: linear-gradient(#686868, #686868) 0 8px / 1px 25px no-repeat; }
.lamp { width: 15px; height: 20px; margin-right: 14px; }
.name { width: 218px; overflow: hidden; white-space: nowrap; margin-top: -2px; }
.fade { mask-image: linear-gradient(90deg, #000 86%, transparent 100%); }
.shut { width: 12px; height: 12px; margin-left: auto; margin-top: 1px; }
.active { background: #3b3b3b; border-radius: 8px 8px 0 0; }
.add { margin-left: 13px; }
.window { display: flex; gap: 43.500px; margin: 0 22px 2px auto; }

.toolbar { height: 48px; flex: none; display: flex; align-items: center; padding-bottom: 2px; }
.nav { width: 125px; padding-left: 25px; display: flex; align-items: center; gap: 34px; }
.address { width: 1460px; height: 37px; margin-top: 1px; border-radius: 19px; background: #2b2b2b; padding: 0 20px 0 21.500px; display: flex; align-items: center; }
.url { flex: 1; margin-left: 18px; font-size: 17px; letter-spacing: -.2px; }
.url i { font-style: normal; color: #969696; }
.lang { font: 16px "Open Sans", "Noto Sans CJK JP", sans-serif; color: #8d8d8d; letter-spacing: -1px; margin-right: 31px; width: 20px; white-space: nowrap; }
.address svg:nth-of-type(2) { margin-right: 30px; }
.address svg:nth-of-type(3) { margin-right: 29px; }
.extras { display: flex; align-items: center; margin-left: 23px; gap: 33.300px; }
.extras svg:nth-child(5) { margin-left: 1px; }
.extras svg:last-child { margin-left: -4px; }

.workspace { height: 942px; flex: none; display: flex; padding: 0 0 4px 5px; }
.page { width: 1860px; height: 938px; display: flex; background: #00030e; border-radius: 9px; overflow: hidden; }
.content { width: 1067px; margin-left: 387px; }
.scroll { width: 19px; margin-left: auto; background: #fcfcfc; padding: 10px 0 11px; display: flex; flex-direction: column; align-items: center; }
.thumb { width: 11px; height: 484px; border-radius: 6px; background: #8b8b8b; margin: 66px 0 auto; }

.title { margin: 0; height: 47px; padding-top: 25px; border-bottom: 4px solid #fff; text-align: center; font-weight: 400; font-size: 12.800px; line-height: 18px; letter-spacing: -.1px; }
.second { height: 38px; padding-top: 19px; border-bottom-width: 1px; }
.third { height: 20px; padding-top: 1px; border-bottom-width: 1px; }
.map { position: relative; height: 416px; background: #f2efe9; }
.water { fill: #aad3df; }
.thinwater { fill: none; stroke: #aad3df; }
.wood { fill: #bedbb1; }
.land { fill: #f2efe9; }
.lane { fill: none; stroke: #cfcfd0; stroke-width: 3.500; }
.border { fill: none; stroke: #d9c7d5; stroke-width: 4; stroke-dasharray: 26 4; }
.district { fill: none; stroke: #9c87b4; stroke-width: 5; stroke-linejoin: round; opacity: .8; }
.rail { fill: none; stroke: #b4b4b2; stroke-width: 4.500; stroke-linejoin: round; }
.red { fill: none; stroke: #f99d86; stroke-width: 6.500; stroke-linejoin: round; }
.yellow { fill: none; stroke: #fac67f; stroke-width: 6; stroke-linejoin: round; }
.brown { fill: none; stroke: #b38f83; stroke-width: 6; }
.town text, .region text { font: 9px "Noto Sans", sans-serif; fill: #4c4c4c; stroke: #fffc; stroke-width: 1.500px; paint-order: stroke; }
.town .big { font-size: 11px; fill: #555; }
.region text { font-style: italic; font-size: 8px; fill: #a87fae; }
.region .lake { font-size: 9px; fill: #6b91c3; stroke: none; }
.zoom { position: absolute; left: 9px; top: 8px; width: 27px; height: 52px; border: 1px solid #bbb; border-radius: 3px; background: #fff; color: #000; display: grid; grid-template-rows: 25px 25px; overflow: hidden; }
.zoom b { font: bold 18px/25px "Liberation Sans", sans-serif; text-align: center; }
.zoom b + b { border-top: 1px solid #ccc; line-height: 23px; }
.credit { position: absolute; right: 0; bottom: 0; height: 14px; width: 195px; padding-left: 4px; background: #fffc; font: 9.600px/14px "Liberation Sans", sans-serif; color: #333; white-space: nowrap; letter-spacing: .05px; }
.credit svg { display: inline-block; margin-right: 3px; }
.credit a { color: #0078a8; }

.row { display: grid; grid-template-columns: 288px 282px 231px 266px; height: 40.500px; padding-top: 1px; border-bottom: 1px solid #e0e0e0; align-items: center; text-align: center; font-size: 12.800px; letter-spacing: -.1px; }
.row span:first-child { text-align: left; padding-left: 10px; }
.head { height: 41px; padding-top: 0; font-weight: 700; font-size: 12.500px; letter-spacing: -.15px; }
.caption text { font: 9.100px "Liberation Sans", sans-serif; fill: #fff; }
.value text { font: 9px "Liberation Sans", sans-serif; }

.side { flex: 1; display: flex; flex-direction: column; align-items: center; padding: 15px 2px 0 0; gap: 26.200px; }
.side svg { width: 24px; height: 24px; }
.side .more { margin-top: 3px; }
.foot { width: 36px; margin-top: auto; border-top: 1px solid #666; padding: 16px 0 11px; display: flex; flex-direction: column; align-items: center; gap: 26px; }

.taskbar { height: 50px; flex: none; display: flex; background: #101010; }
.start { width: 60px; display: grid; place-items: center; }
.search { width: 360px; border: 1px solid #666; background: #404040; padding-left: 14px; display: flex; align-items: center; overflow: hidden; }
.search span { margin-left: 13px; font-size: 17.500px; letter-spacing: 0; color: #ddd; }
.peaks { margin: 7px 0 0 auto; }
.view { width: 63px; padding-right: 2px; display: grid; place-items: center; }
.apps { display: flex; }
.app { width: 62px; padding: 0 5px; display: grid; place-items: center; }
.app svg { width: 32px; height: 32px; }
.open { background: linear-gradient(#76cff5, #76cff5) center bottom / 51px 3px no-repeat; }
.group { background: linear-gradient(90deg, #76cff5 80%, #579ab7 80%) center bottom / 51px 3px no-repeat; }
.current { background: linear-gradient(#76cff5, #76cff5) bottom / 100% 3px no-repeat #343434; }
.new { font: bold 8px "Liberation Sans", sans-serif; }
.weather { margin-left: 231px; display: flex; align-items: center; font-size: 17px; letter-spacing: .05px; white-space: nowrap; width: 167px; }
.weather span { margin-left: 8px; }
.tray { margin-left: 30px; width: 109px; display: flex; align-items: center; justify-content: space-between; }
.clock { margin-left: 12px; width: 70px; padding-top: 1px; display: flex; flex-direction: column; align-items: center; font-size: 14.500px; line-height: 24px; letter-spacing: -.45px; }
.note { margin-left: 12px; width: 57px; border-right: 1px solid #555; display: grid; place-items: center; padding-right: 15px; }
```
